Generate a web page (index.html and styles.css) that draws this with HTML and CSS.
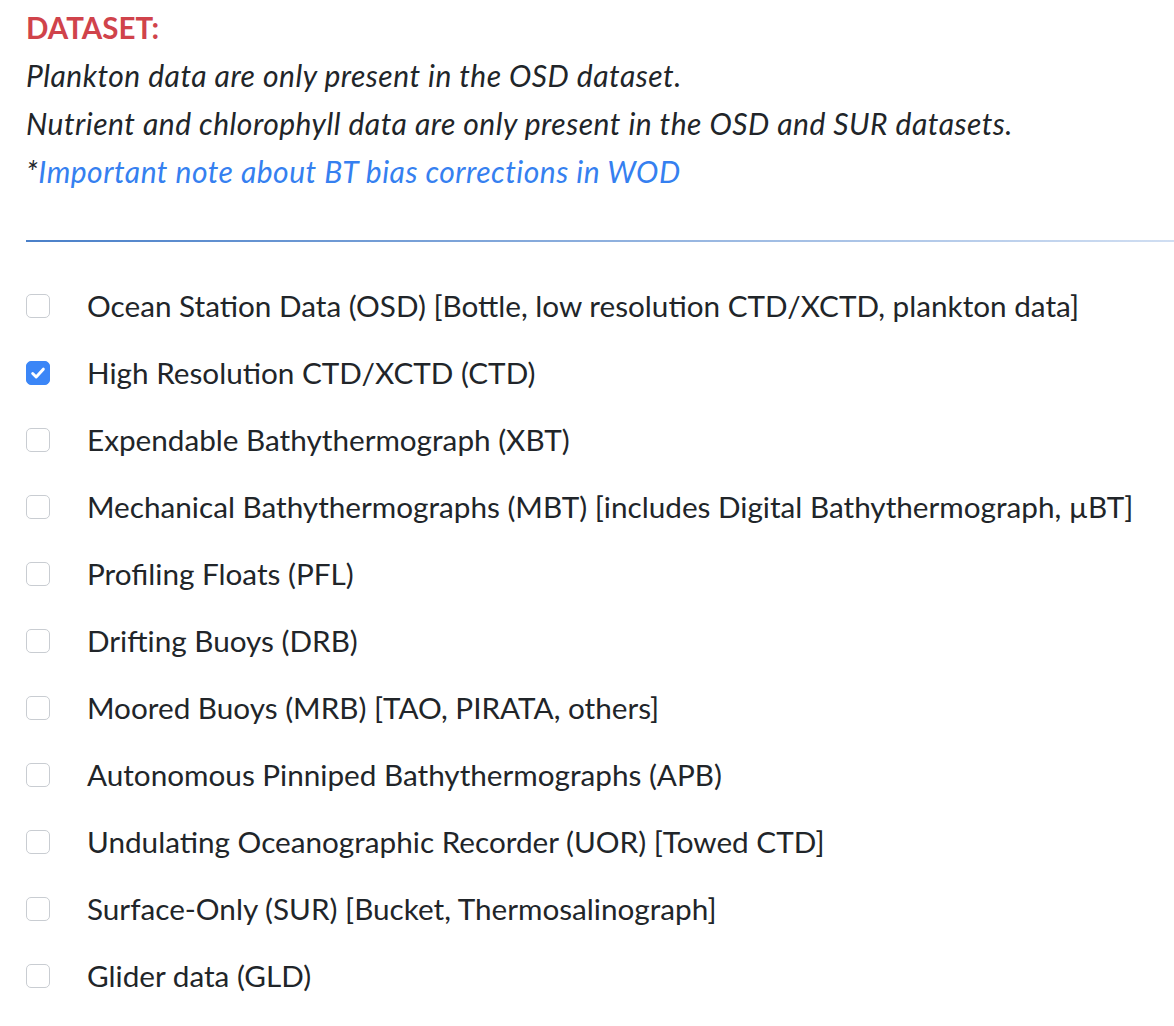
FILE: index.html
```html
<!DOCTYPE html>
<html lang="en">
<head>
<meta charset="utf-8">
<title>Dataset</title>
<link rel="stylesheet" href="styles.css">
</head>
<body>
<div class="page">
  <h4 class="title">DATASET:</h4>
  <div class="notes">
    <p class="note">Plankton data are only present in the OSD dataset.</p>
    <p class="note">Nutrient and chlorophyll data are only present in the OSD and SUR datasets.</p>
    <p class="note">*<a class="link" href="#">Important note about BT bias corrections in WOD</a></p>
  </div>
  <hr class="rule">
  <ul class="list">
    <li class="row"><span class="box"></span><span class="label">Ocean Station Data (OSD) [Bottle, low resolution CTD/XCTD, plankton data]</span></li>
    <li class="row"><span class="box checked"><svg viewBox="0 0 24 24" width="24" height="24"><path d="M6.2 12.6 L10 16.4 L17.8 7.8" fill="none" stroke="#fff" stroke-width="3.2" stroke-linecap="round" stroke-linejoin="round"/></svg></span><span class="label">High Resolution CTD/XCTD (CTD)</span></li>
    <li class="row"><span class="box"></span><span class="label">Expendable Bathythermograph (XBT)</span></li>
    <li class="row"><span class="box"></span><span class="label">Mechanical Bathythermographs (MBT) [includes Digital Bathythermograph, µBT]</span></li>
    <li class="row"><span class="box"></span><span class="label">Profiling Floats (PFL)</span></li>
    <li class="row"><span class="box"></span><span class="label">Drifting Buoys (DRB)</span></li>
    <li class="row"><span class="box"></span><span class="label">Moored Buoys (MRB) [TAO, PIRATA, others]</span></li>
    <li class="row"><span class="box"></span><span class="label">Autonomous Pinniped Bathythermographs (APB)</span></li>
    <li class="row"><span class="box"></span><span class="label">Undulating Oceanographic Recorder (UOR) [Towed CTD]</span></li>
    <li class="row"><span class="box"></span><span class="label">Surface-Only (SUR) [Bucket, Thermosalinograph]</span></li>
    <li class="row"><span class="box"></span><span class="label">Glider data (GLD)</span></li>
  </ul>
</div>
</body>
</html>
```
FILE: styles.css
```css
html, body {
  margin: 0;
  padding: 0;
  background: #fff;
}
body {
  font-family: Lato, "Open Sans", sans-serif;
  color: #212529;
}
.page {
  padding: 8px 0 0 26px;
}
.title {
  margin: 0;
  font-size: 29.5px;
  line-height: 40px;
  font-weight: 700;
  color: #d0434b;
}
.notes {
  margin-top: 3px;
}
.note {
  margin: 0;
  font-size: 30px;
  letter-spacing: 0.5px;
  line-height: 48px;
  font-style: italic;
}
.link {
  color: #3580f0;
  text-decoration: none;
}
.rule {
  margin: 45px 0 0 0;
  border: 0;
  height: 2px;
  background: linear-gradient(to right, #4a80c9, #d0def2);
}
.list {
  list-style: none;
  margin: 30px 0 0 0;
  padding: 0;
}
.row {
  display: flex;
  align-items: center;
  height: 67px;
  font-size: 29.7px;
}
.box {
  width: 22px;
  height: 22px;
  border: 1px solid #c9cdd2;
  border-radius: 5px;
  background: #fff;
  flex: none;
  margin-right: 37px;
  display: flex;
  align-items: center;
  justify-content: center;
}
.box.checked {
  border-color: #3b86f7;
  background: #3b86f7;
}
.box svg {
  display: block;
}
.label {
  white-space: nowrap;
}
```
